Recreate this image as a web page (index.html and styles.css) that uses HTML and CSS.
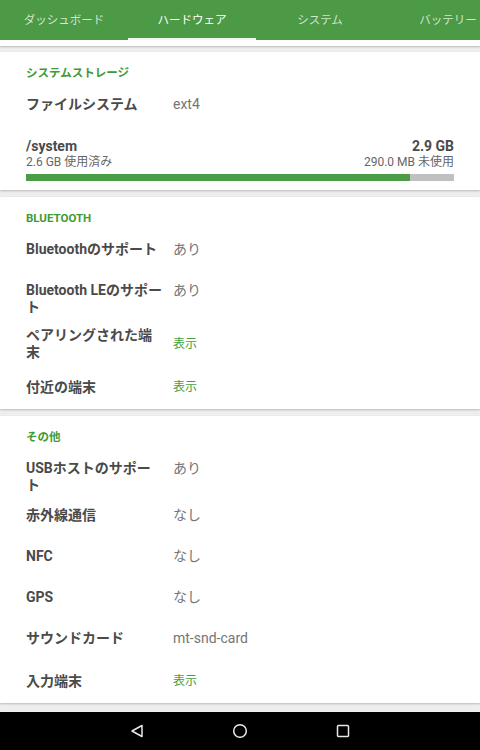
FILE: index.html
```html
<!DOCTYPE html>
<html lang="ja">
<head>
    <meta charset="UTF-8">
    <meta name="viewport" content="width=device-width, initial-scale=1.0">
    <title>ハードウェア</title>
    <link rel="stylesheet" href="styles.css">
</head>
<body>
    <div class="tabs">
        <div class="tab">ダッシュボード</div>
        <div class="tab active">ハードウェア</div>
        <div class="tab">システム</div>
        <div class="tab">バッテリー</div>
    </div>

    <div class="content">
        <div class="card stub"></div>

        <!-- ストレージ -->
        <div class="card">
            <div class="card-title">システムストレージ</div>
            <div class="row">
                <div class="label">ファイルシステム</div>
                <div class="value">ext4</div>
            </div>
            <div class="storage">
                <div class="storage-line">
                    <span>/system</span>
                    <span>2.9 GB</span>
                </div>
                <div class="storage-sub">
                    <span>2.6 GB 使用済み</span>
                    <span>290.0 MB 未使用</span>
                </div>
                <div class="bar">
                    <div class="bar-fill" style="width: 89.7%;"></div>
                </div>
            </div>
        </div>

        <div class="card">
            <div class="card-title">BLUETOOTH</div>
            <div class="row">
                <div class="label">Bluetoothのサポート</div>
                <div class="value">あり</div>
            </div>
            <div class="row">
                <div class="label">Bluetooth LEのサポー<br>ト</div>
                <div class="value">あり</div>
            </div>
            <div class="row link">
                <div class="label two">ペアリングされた端<br>末</div>
                <div class="value">表示</div>
            </div>
            <div class="row link">
                <div class="label">付近の端末</div>
                <div class="value">表示</div>
            </div>
        </div>

        <div class="card">
            <div class="card-title">その他</div>
            <div class="row">
                <div class="label">USBホストのサポー<br>ト</div>
                <div class="value">あり</div>
            </div>
            <div class="row">
                <div class="label">赤外線通信</div>
                <div class="value">なし</div>
            </div>
            <div class="row">
                <div class="label">NFC</div>
                <div class="value">なし</div>
            </div>
            <div class="row">
                <div class="label">GPS</div>
                <div class="value">なし</div>
            </div>
            <div class="row">
                <div class="label">サウンドカード</div>
                <div class="value">mt-snd-card</div>
            </div>
            <div class="row link">
                <div class="label">入力端末</div>
                <div class="value">表示</div>
            </div>
        </div>
    </div>

    <div class="navbar">
        <svg width="14" height="14" viewBox="0 0 14 14">
            <path d="M12 1.5 L12 12.5 L2 7 Z" fill="none" stroke="#e8e8e8" stroke-width="1.5" stroke-linejoin="round"/>
        </svg>
        <svg width="16" height="16" viewBox="0 0 16 16">
            <circle cx="8" cy="8" r="6.3" fill="none" stroke="#e8e8e8" stroke-width="1.5"/>
        </svg>
        <svg width="14" height="14" viewBox="0 0 14 14">
            <rect x="1.5" y="1.5" width="11" height="11" rx="1" fill="none" stroke="#e8e8e8" stroke-width="1.5"/>
        </svg>
    </div>
</body>
</html>
```

FILE: styles.css
```css
body, html {
    margin: 0;
    padding: 0;
    height: 100%;
    font-family: Roboto, "Noto Sans CJK JP", sans-serif;
}

body {
    display: flex;
    flex-direction: column;
    height: 750px;
    overflow: hidden;
    background-color: #eeeeee;
}

.tabs {
    display: flex;
    height: 40px;
    background-color: #4c9946;
    overflow: hidden;
    flex-shrink: 0;
}

.tab {
    width: 128px;
    height: 40px;
    flex-shrink: 0;
    box-sizing: border-box;
    padding-top: 2px;
    text-align: center;
    line-height: 36px;
    font-size: 11.5px;
    color: rgba(255, 255, 255, 0.75);
    white-space: nowrap;
}

.tab.active {
    color: #fff;
    border-bottom: 2px solid #f4f4f4;
}

.content {
    flex: 1;
    display: flex;
    flex-direction: column;
    gap: 7px;
    overflow: hidden;
}

.card {
    background-color: #fff;
    box-shadow: 0 1px 2px rgba(0, 0, 0, 0.22);
    padding: 0 26px;
    flex-shrink: 0;
}

.card.stub {
    height: 6px;
    margin-bottom: -1px;
}

.card-title {
    padding: 14px 0 4px;
    line-height: 14px;
    font-size: 11.5px;
    font-weight: bold;
    color: #3f9a37;
}

.row {
    display: flex;
    align-items: flex-start;
}

.label {
    width: 147px;
    flex-shrink: 0;
    padding: 12px 0 1px;
    line-height: 17px;
    font-size: 14px;
    font-weight: bold;
    color: #4a4a4a;
    white-space: nowrap;
}

.value {
    padding: 12px 0;
    line-height: 17px;
    font-size: 14px;
    color: #757575;
}

.row.link {
    align-items: center;
    min-height: 44px;
}

.row.link .label {
    padding: 0;
}

.row.link .label.two {
    padding: 10px 0 4px;
}

.row.link .value {
    padding: 0;
    font-size: 12px;
    color: #45a03c;
}

.row.link .label.two + .value {
    margin-top: 6px;
}

.storage {
    padding: 13px 0 9px;
}

.storage-line {
    display: flex;
    justify-content: space-between;
    line-height: 17px;
    font-size: 14px;
    font-weight: bold;
    color: #4a4a4a;
}

.storage-sub {
    display: flex;
    justify-content: space-between;
    line-height: 15px;
    font-size: 12px;
    color: #666;
}

.bar {
    margin-top: 4px;
    height: 7px;
    background-color: #c0c0c0;
}

.bar-fill {
    height: 100%;
    background-color: #4a9c45;
}

.navbar {
    height: 38px;
    flex-shrink: 0;
    background-color: #000;
    display: flex;
    justify-content: center;
    align-items: center;
    gap: 88px;
}
```
